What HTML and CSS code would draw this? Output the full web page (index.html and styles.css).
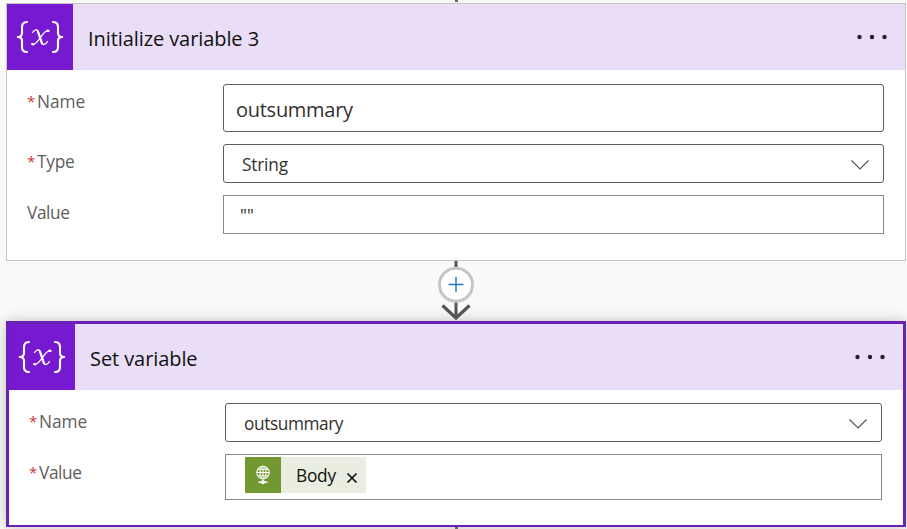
FILE: index.html
```html
<!DOCTYPE html>
<html lang="en">
<head>
<meta charset="utf-8">
<title>Flow</title>
<link rel="stylesheet" href="styles.css">
</head>
<body>
<svg class="defs" width="0" height="0">
  <symbol id="variable" viewBox="0 0 66 66">
    <g fill="none" stroke="#fff" stroke-linecap="round" stroke-linejoin="round">
      <path stroke-width="2.1" d="M20 18q-5 0-5 5v6q0 4-4.2 4 4.200 0 4.200 4v6q0 5 5 5M46 18q5 0 5 5v6q0 4 4.200 4-4.200 0-4.200 4v6q0 5-5 5"/>
      <path stroke-width="1.3" d="M25.500 28.500C27.500 25.500 30.300 24.500 31.300 28L34.800 38.500C35.800 41.500 38.500 41 40.500 37.500M41.500 26.800C36 25 32 40.500 26 40.300"/>
      <path stroke-width="2.300" d="M30.900 27.500L35 39.500M40.500 26.700L41.500 26.900M25.200 40.100L26.200 40.300"/>
    </g>
  </symbol>
  <symbol id="dots" viewBox="0 0 32 6">
    <g fill="#24202b"><circle cx="3.500" cy="3" r="2.200"/><circle cx="16" cy="3" r="2.200"/><circle cx="28.500" cy="3" r="2.200"/></g>
  </symbol>
  <symbol id="chevron" viewBox="0 0 20 12">
    <path d="M1.500 1.500L10 10L18.500 1.500" fill="none" stroke="#555" stroke-width="1.200"/>
  </symbol>
</svg>
<main class="flow">
  <div class="lead"></div>
  <section class="card">
    <header class="head">
      <span class="tile"><svg width="66" height="66"><use href="#variable"/></svg></span>
      <h2 class="title title-init">Initialize variable 3</h2>
      <svg class="dots" width="32" height="6"><use href="#dots"/></svg>
    </header>
    <div class="row row-name">
      <label class="label"><i class="req">*</i><span class="t-name">Name</span></label>
      <div class="field field-tall"><span class="t-big">outsummary</span></div>
    </div>
    <div class="row">
      <label class="label"><i class="req">*</i><span class="t-type">Type</span></label>
      <div class="field field-select"><span class="t-string">String</span><svg width="20" height="12"><use href="#chevron"/></svg></div>
    </div>
    <div class="row">
      <label class="label"><span class="t-value">Value</span></label>
      <div class="field field-plain"><span class="t-quotes">""</span></div>
    </div>
  </section>
  <div class="link">
    <svg width="40" height="60" viewBox="0 0 40 60">
      <path d="M20 0V56" stroke="#555" stroke-width="3"/>
      <path d="M6.500 44.500L20 57L33.500 44.500" fill="none" stroke="#555" stroke-width="3.200"/>
      <circle cx="20" cy="23.700" r="16.500" fill="#fff" stroke="#c8c6c4" stroke-width="3"/>
      <path d="M12.500 23.500H27.500M20 16V31" stroke="#2b7acb" stroke-width="1.500"/>
    </svg>
  </div>
  <section class="card selected">
    <header class="head">
      <span class="tile"><svg width="66" height="66"><use href="#variable"/></svg></span>
      <h2 class="title title-set">Set variable</h2>
      <svg class="dots" width="32" height="6"><use href="#dots"/></svg>
    </header>
    <div class="row row-select">
      <label class="label"><i class="req">*</i><span class="t-name">Name</span></label>
      <div class="field field-select"><span class="t-mid">outsummary</span><svg width="20" height="12"><use href="#chevron"/></svg></div>
    </div>
    <div class="row">
      <label class="label"><i class="req">*</i><span class="t-value">Value</span></label>
      <div class="field field-plain field-token">
        <span class="token">
          <span class="token-icon"><svg width="36" height="36" viewBox="0 0 36 36" fill="none" stroke="#fff" stroke-width="1.100">
            <circle cx="18" cy="15.500" r="6.200"/><ellipse cx="18" cy="15.500" rx="3" ry="6.200"/>
            <path d="M18 9.300v15.500M11.800 15.500h12.400M12.800 12.300h10.400M12.800 18.700h10.400"/>
            <path d="M13.500 25.200h9" stroke-width="1.500"/><circle cx="18" cy="25.200" r="1.400" fill="#fff"/>
          </svg></span>
          <span class="t-body">Body</span>
          <svg class="close" width="12" height="12" viewBox="0 0 12 12"><path d="M1.500 1.500l9 9M10.500 1.500l-9 9" stroke="#111" stroke-width="1.700"/></svg>
        </span>
      </div>
    </div>
  </section>
  <div class="trail"></div>
</main>
</body>
</html>
```
FILE: styles.css
```css
* { box-sizing: border-box; }
html, body { margin: 0; height: 529px; overflow: hidden; }
body {
  background: #faf9f8;
  color: #323130;
  font: 17.3px/24px "Open Sans", "Noto Sans", sans-serif;
}
.defs { display: none; }
svg { display: block; flex: none; }
.flow { width: 900px; margin-left: 6px; }
.lead, .trail { width: 3px; height: 3px; margin-left: 449px; background: #666; }
.lead { height: 2px; margin-bottom: 1px; }
.link { display: flex; justify-content: center; }
.card {
  height: 258px;
  background: #fff;
  border: 1px solid #c8c6c4;
}
.selected {
  height: 206px;
  border: 3px solid #6b21b5;
  border-bottom-width: 2px;
  box-shadow: 0 0 12px rgba(0, 0, 0, .24);
}
.head {
  display: flex;
  align-items: center;
  height: 66px;
  padding-right: 17px;
  background: #e9ddf7;
}
.tile { width: 66px; height: 66px; background: #7719d1; }
.title {
  margin: 3px 0 0 15px;
  color: #111;
  font-size: 20px;
  font-weight: 400;
  line-height: 28px;
  white-space: nowrap;
}
.title-init { letter-spacing: -.08px; }
.title-set { letter-spacing: -.08px; }
.dots { margin-left: auto; }
.row { display: flex; padding: 12px 21px 0 20px; }
.row-name { padding-top: 14px; }
.row-select { padding-top: 13px; }
.label {
  display: flex;
  width: 196px;
  padding-top: 6px;
  color: #605e5c;
}
.selected .label { padding-top: 7px; }
.req {
  width: 10px;
  margin-top: -1px;
  color: #d13438;
  font-size: 15px;
  font-style: normal;
}
.field {
  display: flex;
  flex: 1;
  align-items: center;
  justify-content: space-between;
  height: 39px;
  padding: 2px 13px 0 18px;
  border: 1px solid #605e5c;
  border-radius: 3px;
}
.field-tall { height: 48px; padding: 4px 12px 0; }
.field-plain { padding-left: 16px; border-color: #8a8886; border-radius: 0; }
.field-token { height: 46px; padding: 0 19px; }
.t-big { font-size: 20px; letter-spacing: -.27px; }
.t-mid { letter-spacing: -.42px; }
.t-string { letter-spacing: -.2px; }
.t-value { letter-spacing: -.4px; }
.t-type { letter-spacing: -.25px; }
.token {
  display: flex;
  align-items: center;
  width: 121px;
  height: 36px;
  margin-top: -4px;
  background: #e9eee0;
  color: #111;
}
.token-icon { background: #739832; }
.t-body { width: 40px; margin: 2px 10px 0 15px; letter-spacing: -.25px; }
.close { margin-top: 6px; }
```
